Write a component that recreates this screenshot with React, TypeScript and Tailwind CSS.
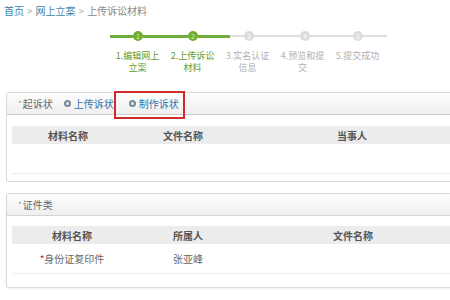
import React from "react";

const font = { fontFamily: '"Noto Sans CJK SC", "Noto Sans", sans-serif' };

function Circle({ n, done }: { n: number; done: boolean }) {
  return (
    <div
      className={`w-[10px] h-[10px] rounded-full flex items-center justify-center text-[7px] leading-none shrink-0 ${
        done ? "bg-[#6fae35] text-[#d8f0c0]" : "bg-[#dcdcdc] text-white"
      }`}
    >
      {n}
    </div>
  );
}

function Radio() {
  return (
    <span className="inline-flex w-[7px] h-[7px] rounded-full border-[2px] border-[#7d8b98] bg-[#e8eef2] mr-[3px]" />
  );
}

export default function App() {
  const labels: [string, string, boolean][] = [
    ["1.编辑网上", "立案", true],
    ["2.上传诉讼", "材料", true],
    ["3.实名认证", "信息", false],
    ["4.预览和提", "交", false],
    ["5.提交成功", "", false],
  ];
  return (
    <div className="w-[450px] h-[300px] overflow-hidden bg-white relative" style={font}>
      {/* breadcrumb */}
      <div className="h-[20px] pl-[4px] pt-[2px] text-[10px] leading-[14px] text-[#888] flex items-center gap-[2px]">
        <span className="text-[#3b86ad]">首页</span>
        <span className="text-[#aaa] px-[1px]">&gt;</span>
        <span className="text-[#3b86ad]">网上立案</span>
        <span className="text-[#aaa] px-[1px]">&gt;</span>
        <span>上传诉讼材料</span>
      </div>

      {/* stepper line */}
      <div className="mt-[11px] ml-[110px] flex items-center h-[10px]">
        <div className="w-[23px] h-[3px] bg-[#6fae35]" />
        <Circle n={1} done />
        <div className="w-[45px] h-[3px] bg-[#6fae35]" />
        <Circle n={2} done />
        <div className="w-[32px] h-[3px] bg-[#6fae35]" />
        <div className="w-[14px] h-[2px] bg-[#dedede]" />
        <Circle n={3} done={false} />
        <div className="w-[46px] h-[2px] bg-[#dedede]" />
        <Circle n={4} done={false} />
        <div className="w-[43px] h-[2px] bg-[#dedede]" />
        <Circle n={5} done={false} />
        <div className="w-[24px] h-[2px] bg-[#dedede]" />
      </div>
      <div className="ml-[110px] mt-[9px] flex">
        {labels.map(([a, b, d], i) => (
          <div
            key={i}
            className={`w-[55px] text-center text-[9px] leading-[12px] whitespace-nowrap ${d ? "text-[#5f9e2a]" : "text-[#b0b0b0]"}`}
          >
            {a}
            <br />
            {b}
          </div>
        ))}
      </div>

      {/* panel 1 */}
      <div className="ml-[6px] mt-[18px] w-[480px] border border-[#d9d9d9] rounded-[2px] relative">
        <div className="h-[22px] bg-gradient-to-b from-[#fdfdfd] to-[#efefef] border-b border-[#cfcfcf] flex items-center pl-[11px] text-[10px] text-[#666]">
          <span className="text-[#999] mr-[1px] text-[8px]">*</span>
          <span>起诉状</span>
          <span className="ml-[11px] flex items-center text-[#2f73aa]">
            <Radio />
            上传诉状
          </span>
          <span className="ml-[15px] flex items-center text-[#2f73aa]">
            <Radio />
            制作诉状
          </span>
          <div className="absolute left-[107px] top-[-2px] w-[71px] h-[28px] border-2 border-[#cf2b2b]" />
        </div>
        <div className="px-[5px] pt-[11px] pb-[7px]">
          <div className="grid grid-cols-[112px_118px_220px] h-[18px] bg-[#ececec] items-center text-[10px] font-bold text-[#555]">
            <div className="text-center">材料名称</div>
            <div className="text-center">文件名称</div>
            <div className="text-center">当事人</div>
          </div>
          <div className="h-[30px] border-b border-[#ececec]" />
        </div>
      </div>

      {/* panel 2 */}
      <div className="ml-[6px] mt-[11px] w-[480px] border border-[#d9d9d9] rounded-[2px] shadow-[0_1px_2px_rgba(0,0,0,0.08)]">
        <div className="h-[22px] bg-gradient-to-b from-[#fdfdfd] to-[#efefef] border-b border-[#d4d4d4] flex items-center pl-[11px] text-[10px] text-[#666]">
          <span className="text-[#999] mr-[1px] text-[8px]">*</span>
          <span>证件类</span>
        </div>
        <div className="px-[5px] pt-[10px] pb-[13px]">
          <div className="grid grid-cols-[120px_112px_218px] h-[18px] bg-[#ececec] items-center text-[10px] font-bold text-[#555]">
            <div className="text-center">材料名称</div>
            <div className="text-center">所属人</div>
            <div className="text-center">文件名称</div>
          </div>
          <div className="grid grid-cols-[120px_112px_218px] h-[30px] items-center text-[10px] text-[#666] border-b border-[#eeeeee]">
            <div className="text-center">
              <span className="text-[#b0203a]">*</span>身份证复印件
            </div>
            <div className="text-center">张亚峰</div>
            <div />
          </div>
        </div>
      </div>
    </div>
  );
}
